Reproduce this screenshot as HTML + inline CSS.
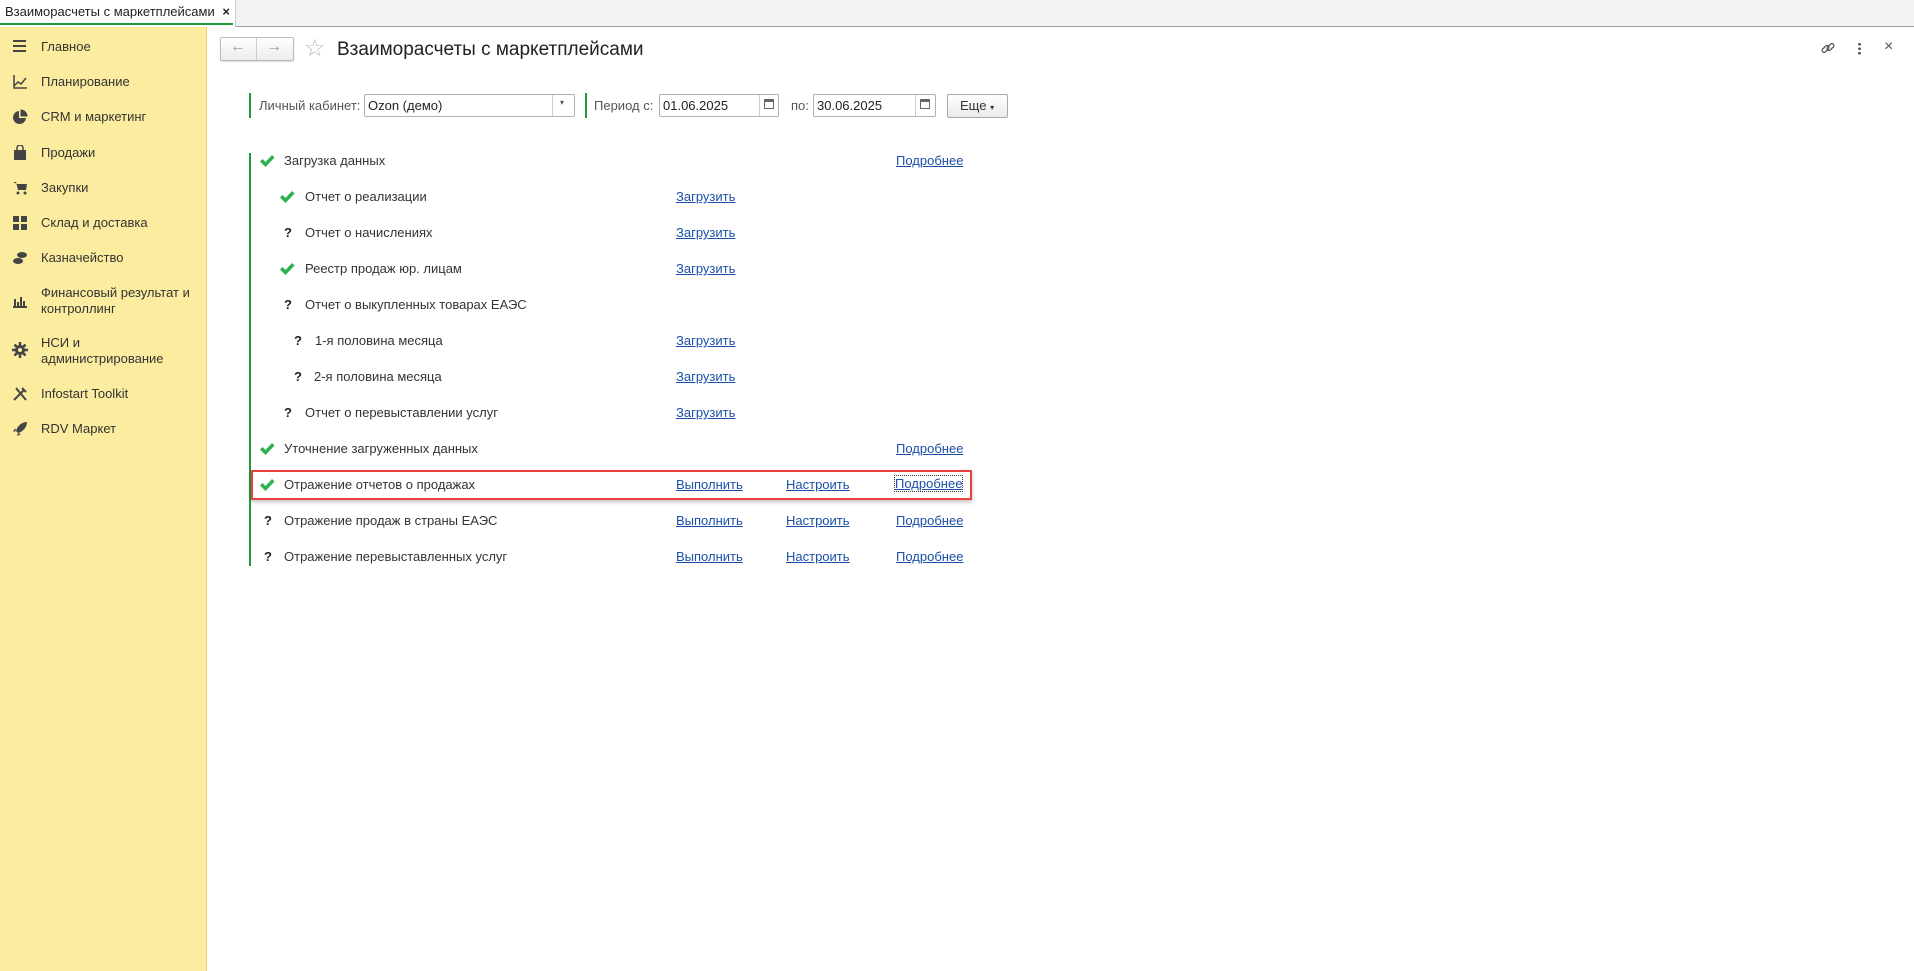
<!DOCTYPE html>
<html><head><meta charset="utf-8"><style>
*{box-sizing:border-box;margin:0;padding:0}
body{width:1914px;height:971px;overflow:hidden;background:#fff;font-family:"Liberation Sans",Arial,sans-serif;font-size:13px;color:#333;position:relative}
.abs{position:absolute}
.tabbar{left:0;top:0;width:1914px;height:27px;background:#f2f2f2;border-bottom:1px solid #a0a0a0}
.tab{left:0;top:0;width:236px;height:27px;background:#fff;border-right:1px solid #ccc;font-size:13px;line-height:24px;padding-left:5px;color:#222}
.tab:after{content:"";position:absolute;left:0;bottom:2px;width:233px;height:2px;background:#1c9a3c}
.side{left:0;top:27px;width:207px;height:944px;background:#fbec9f;border-right:1px solid #e3d07a}
.mi{left:41px;font-size:13px;color:#333;line-height:16px}
.ic{left:12px;width:16px;height:16px}
.link{color:#1a4fa8;text-decoration:underline;font-size:13px}
.row{font-size:13px;color:#333;line-height:16px}
.chk{width:16px;height:14px}
.q{font-weight:bold;color:#222;font-size:13px}
.inp{border:1px solid #b0b0b0;border-radius:2px;background:#fff;height:23px;font-size:13px;line-height:21px;padding-left:3px;color:#222}
.lbl{font-size:13px;color:#555}
.gbar{width:2px;background:#1c9a3c}
.cal{width:10px;height:10px;border:1px solid #666;border-top-width:3px}
</style></head><body>
<svg width="0" height="0" style="position:absolute"><defs><symbol id="ck" viewBox="0 0 16 14"><path d="M1 7.5l2.5-2.5 3 3L13 1l2.5 2.5L6.5 13z" fill="#2bb24c"/></symbol></defs></svg>
<div class="abs tabbar"></div>
<div class="abs tab">Взаиморасчеты с маркетплейсами <b style="margin-left:4px">×</b></div>
<div class="abs side"></div>

<svg class="abs ic" style="top:38px" viewBox="0 0 16 16"><rect x="1" y="2" width="13" height="2" fill="#444"/><rect x="1" y="7" width="13" height="2" fill="#444"/><rect x="1" y="12" width="13" height="2" fill="#444"/></svg>
<div class="abs mi" style="top:39px">Главное</div>
<svg class="abs ic" style="top:74px" viewBox="0 0 16 16"><path d="M2 1v13h13M2 12l4-4 3 2 5-6" stroke="#444" stroke-width="1.5" fill="none"/></svg>
<div class="abs mi" style="top:74px">Планирование</div>
<svg class="abs ic" style="top:109px" viewBox="0 0 16 16"><path d="M7 2a6.5 6.5 0 1 0 7 7H7z" fill="#444"/><path d="M8.5 0.5v7h7A7 7 0 0 0 8.5 0.5z" fill="#444"/></svg>
<div class="abs mi" style="top:109px">CRM и маркетинг</div>
<svg class="abs ic" style="top:145px" viewBox="0 0 16 16"><path d="M2 5h12v10H2z" fill="#444"/><path d="M5 5V3a3 3 0 0 1 6 0v2" stroke="#444" stroke-width="1.5" fill="none"/></svg>
<div class="abs mi" style="top:145px">Продажи</div>
<svg class="abs ic" style="top:180px" viewBox="0 0 16 16"><path d="M1 2h3l2 8h8l1-6H5" fill="#444"/><circle cx="6" cy="13" r="1.5" fill="#444"/><circle cx="13" cy="13" r="1.5" fill="#444"/></svg>
<div class="abs mi" style="top:180px">Закупки</div>
<svg class="abs ic" style="top:215px" viewBox="0 0 16 16"><rect x="1" y="1" width="6" height="6" fill="#444"/><rect x="9" y="1" width="6" height="6" fill="#444"/><rect x="1" y="9" width="6" height="6" fill="#444"/><rect x="9" y="9" width="6" height="6" fill="#444"/></svg>
<div class="abs mi" style="top:215px">Склад и доставка</div>
<svg class="abs ic" style="top:250px" viewBox="0 0 16 16"><ellipse cx="6" cy="11" rx="5" ry="3" fill="#444"/><ellipse cx="10" cy="5" rx="5" ry="3" fill="#444"/></svg>
<div class="abs mi" style="top:250px">Казначейство</div>
<svg class="abs ic" style="top:293px" viewBox="0 0 16 16"><path d="M1 14h14M3 6v8M6 9v5M9 4v10M12 8v6" stroke="#444" stroke-width="2"/></svg>
<div class="abs mi" style="top:285px">Финансовый результат и<br>контроллинг</div>
<svg class="abs ic" style="top:342px" viewBox="0 0 16 16"><path d="M8 0v16M0 8h16M2.5 2.5l11 11M13.5 2.5l-11 11" stroke="#444" stroke-width="2.5"/><circle cx="8" cy="8" r="5" fill="#444"/><circle cx="8" cy="8" r="2" fill="#fbec9f"/></svg>
<div class="abs mi" style="top:335px">НСИ и<br>администрирование</div>
<svg class="abs ic" style="top:386px" viewBox="0 0 16 16"><path d="M2 14L12 4M4 2l10 12M10 2l4 4" stroke="#444" stroke-width="2"/></svg>
<div class="abs mi" style="top:386px">Infostart Toolkit</div>
<svg class="abs ic" style="top:421px" viewBox="0 0 16 16"><path d="M15 1C9 1 5 6 4 10l2 2c4-1 9-5 9-11zM4 10l-3 1 2-4M6 12l-1 3 4-2" fill="#444"/></svg>
<div class="abs mi" style="top:421px">RDV Маркет</div>

<div class="abs" style="left:220px;top:37px;width:74px;height:24px;border:1px solid #bbb;border-radius:2px;background:linear-gradient(#fff,#ececec);box-shadow:0 1px 1px rgba(0,0,0,.15)"></div>
<div class="abs" style="left:256px;top:38px;width:1px;height:22px;background:#ccc"></div>
<div class="abs" style="left:230px;top:38px;color:#999;font-size:16px">&#8592;</div>
<div class="abs" style="left:266px;top:38px;color:#999;font-size:16px">&#8594;</div>
<div class="abs" style="left:304px;top:34px;color:#bbb;font-size:24px">☆</div>
<div class="abs" style="left:337px;top:39px;font-size:19px;color:#222">Взаиморасчеты с маркетплейсами</div>
<svg class="abs" style="left:1820px;top:40px" width="16" height="16" viewBox="0 0 16 16"><g stroke="#555" stroke-width="1.3" fill="none"><rect x="1.5" y="7" width="8" height="4" rx="2" transform="rotate(-45 5.5 9)"/><rect x="6.5" y="5" width="8" height="4" rx="2" transform="rotate(-45 10.5 7)"/></g></svg>
<div class="abs" style="left:1858px;top:42px;width:3px;height:14px;background:radial-gradient(circle,#555 1.3px,transparent 1.5px) 0 0/3px 4.5px"></div>
<div class="abs" style="left:1884px;top:38px;font-size:16px;color:#555">×</div>

<div class="abs gbar" style="left:249px;top:93px;height:25px"></div>
<div class="abs lbl" style="left:259px;top:98px">Личный кабинет:</div>
<div class="abs inp" style="left:364px;top:94px;width:211px">Ozon (демо)</div>
<div class="abs" style="left:552px;top:95px;width:1px;height:21px;background:#ccc"></div>
<div class="abs" style="left:560px;top:98px;font-size:8px;color:#555">▾</div>
<div class="abs gbar" style="left:585px;top:93px;height:25px"></div>
<div class="abs lbl" style="left:594px;top:98px">Период с:</div>
<div class="abs inp" style="left:659px;top:94px;width:120px">01.06.2025</div>
<div class="abs" style="left:759px;top:95px;width:1px;height:21px;background:#ccc"></div>
<div class="abs cal" style="left:764px;top:99px"></div>
<div class="abs lbl" style="left:791px;top:98px">по:</div>
<div class="abs inp" style="left:813px;top:94px;width:123px">30.06.2025</div>
<div class="abs" style="left:915px;top:95px;width:1px;height:21px;background:#ccc"></div>
<div class="abs cal" style="left:920px;top:99px"></div>
<div class="abs" style="left:947px;top:94px;width:61px;height:24px;border:1px solid #aaa;border-radius:2px;background:linear-gradient(#fff,#eaeaea);font-size:13px;line-height:22px;padding-left:12px;color:#333">Еще <span style="font-size:8px">▾</span></div>

<div class="abs gbar" style="left:249px;top:153px;height:413px"></div>
<div class="abs" style="left:251px;top:470px;width:721px;height:30px;border:2px solid #e8413f;box-shadow:0 2px 4px rgba(0,0,0,.25)"></div>

<svg class="abs chk" style="left:259px;top:154px"><use href="#ck"/></svg><div class="abs row" style="left:284px;top:153px">Загрузка данных</div><a class="abs link" style="left:896px;top:153px">Подробнее</a>
<svg class="abs chk" style="left:279px;top:190px"><use href="#ck"/></svg><div class="abs row" style="left:305px;top:189px">Отчет о реализации</div><a class="abs link" style="left:676px;top:189px">Загрузить</a>
<div class="abs q" style="left:284px;top:225px">?</div><div class="abs row" style="left:305px;top:225px">Отчет о начислениях</div><a class="abs link" style="left:676px;top:225px">Загрузить</a>
<svg class="abs chk" style="left:279px;top:262px"><use href="#ck"/></svg><div class="abs row" style="left:305px;top:261px">Реестр продаж юр. лицам</div><a class="abs link" style="left:676px;top:261px">Загрузить</a>
<div class="abs q" style="left:284px;top:297px">?</div><div class="abs row" style="left:305px;top:297px">Отчет о выкупленных товарах ЕАЭС</div>
<div class="abs q" style="left:294px;top:333px">?</div><div class="abs row" style="left:315px;top:333px">1-я половина месяца</div><a class="abs link" style="left:676px;top:333px">Загрузить</a>
<div class="abs q" style="left:294px;top:369px">?</div><div class="abs row" style="left:314px;top:369px">2-я половина месяца</div><a class="abs link" style="left:676px;top:369px">Загрузить</a>
<div class="abs q" style="left:284px;top:405px">?</div><div class="abs row" style="left:305px;top:405px">Отчет о перевыставлении услуг</div><a class="abs link" style="left:676px;top:405px">Загрузить</a>
<svg class="abs chk" style="left:259px;top:442px"><use href="#ck"/></svg><div class="abs row" style="left:284px;top:441px">Уточнение загруженных данных</div><a class="abs link" style="left:896px;top:441px">Подробнее</a>
<svg class="abs chk" style="left:259px;top:478px"><use href="#ck"/></svg><div class="abs row" style="left:284px;top:477px">Отражение отчетов о продажах</div><a class="abs link" style="left:676px;top:477px">Выполнить</a><a class="abs link" style="left:786px;top:477px">Настроить</a><a class="abs link" style="left:895px;top:476px;outline:1px dotted #333">Подробнее</a>
<div class="abs q" style="left:264px;top:513px">?</div><div class="abs row" style="left:284px;top:513px">Отражение продаж в страны ЕАЭС</div><a class="abs link" style="left:676px;top:513px">Выполнить</a><a class="abs link" style="left:786px;top:513px">Настроить</a><a class="abs link" style="left:896px;top:513px">Подробнее</a>
<div class="abs q" style="left:264px;top:549px">?</div><div class="abs row" style="left:284px;top:549px">Отражение перевыставленных услуг</div><a class="abs link" style="left:676px;top:549px">Выполнить</a><a class="abs link" style="left:786px;top:549px">Настроить</a><a class="abs link" style="left:896px;top:549px">Подробнее</a>
</body></html>
